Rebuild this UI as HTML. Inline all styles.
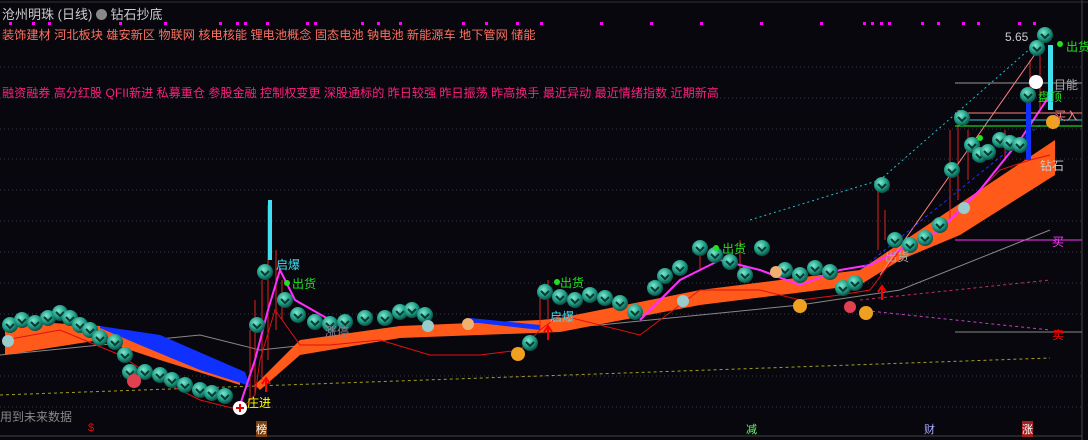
<!DOCTYPE html>
<html><head><meta charset="utf-8"><style>
html,body{margin:0;padding:0;background:#07070d;width:1088px;height:440px;overflow:hidden;font-family:"Liberation Sans","Noto Sans CJK SC",sans-serif}
.t{position:absolute;white-space:nowrap;font-size:12px}
</style></head><body>
<svg width="1088" height="440" style="position:absolute;left:0;top:0">
<defs>
<radialGradient id="g" cx="40%" cy="35%" r="65%"><stop offset="0" stop-color="#7fe8cf"/><stop offset="0.6" stop-color="#1f9e88"/><stop offset="1" stop-color="#0b5044"/></radialGradient>
<g id="c"><circle r="8" fill="url(#g)"/><path d="M-4,-1 L0,3 L4,-1" stroke="#0a3a30" stroke-width="2" fill="none"/></g>
</defs>
<g stroke="#3a3a44" stroke-dasharray="1,3" stroke-width="1">
<line x1="0" y1="67" x2="1082" y2="67"/><line x1="0" y1="98" x2="1082" y2="98"/><line x1="0" y1="129" x2="1082" y2="129"/><line x1="0" y1="159" x2="1082" y2="159"/><line x1="0" y1="190" x2="1082" y2="190"/><line x1="0" y1="221" x2="1082" y2="221"/><line x1="0" y1="252" x2="1082" y2="252"/><line x1="0" y1="283" x2="1082" y2="283"/><line x1="0" y1="314" x2="1082" y2="314"/><line x1="0" y1="376" x2="1082" y2="376"/><line x1="0" y1="407" x2="1082" y2="407"/>
</g>
<line x1="1082" y1="0" x2="1082" y2="440" stroke="#444"/>
<line x1="0" y1="436" x2="1082" y2="436" stroke="#444"/>
<line x1="0" y1="395" x2="1050" y2="358" stroke="#a0a020" stroke-dasharray="3,3"/>
<polyline points="0,355 100,345 200,335 260,350 400,335 600,325 800,305 900,290 1000,250 1050,230" stroke="#888" fill="none"/>
<polyline points="860,300 1050,280" stroke="#c03060" stroke-dasharray="3,3" fill="none"/>
<polyline points="860,310 1050,330" stroke="#c040c0" stroke-dasharray="3,3" fill="none"/>
<polygon points="5,320 100,326 160,345 240,370 240,385 160,360 100,340 5,355" fill="#ff5a1a"/>
<polygon points="100,326 160,335 245,372 250,386 200,370 140,345 100,328" fill="#1030ff"/>
<polygon points="255,385 300,340 400,326 540,320 560,318 700,290 860,270 860,285 700,305 560,332 400,338 300,355 260,390" fill="#ff5a1a"/>
<polygon points="470,322 540,330 540,325 470,318" fill="#1030ff"/>
<polygon points="860,270 1055,140 1055,175 960,235 900,260 860,285" fill="#ff5a1a"/>
<g stroke="#e02020" fill="none">
<path d="M250,400V330M255,395V300M262,380V280M268,360V205M276,330V250M282,320V280"/>
<path d="M540,330V285M548,320V280M700,270V240M740,280V240M878,250V185M885,240V210"/>
<path d="M950,220V130M958,200V110M968,180V130M1005,160V130M1030,150V60M1040,110V40"/>
</g>
<polyline points="5,340 60,330 120,355 150,375 200,400 240,410 255,395 260,360 275,310 300,345 330,345 380,340 430,355 480,355 520,350 540,330 560,315 640,335 700,290 760,290 800,300 840,295 870,290 900,250 940,230 970,200 1000,170 1030,160 1050,155" stroke="#e01010" fill="none"/>
<polyline points="240,405 255,360 268,310 280,270 295,300 330,320" stroke="#ff30ff" stroke-width="2" fill="none"/>
<polyline points="640,320 680,280 720,260 760,270 800,285 840,270 870,265 900,250 940,230 980,190 1020,140 1050,95" stroke="#ff30ff" stroke-width="2" fill="none"/>
<polyline points="880,275 1045,40" stroke="#ff8080" fill="none"/>
<polyline points="750,220 880,180 1040,40" stroke="#20c0d0" stroke-dasharray="2,3" fill="none"/>
<polyline points="860,270 1040,125" stroke="#2030ff" stroke-dasharray="3,3" fill="none"/>
<line x1="955" y1="83" x2="1082" y2="83" stroke="#999"/>
<line x1="955" y1="113" x2="1082" y2="113" stroke="#ff8080"/>
<line x1="955" y1="120" x2="1082" y2="120" stroke="#20d0d0"/>
<line x1="955" y1="126" x2="1082" y2="126" stroke="#20ff20"/>
<line x1="955" y1="240" x2="1082" y2="240" stroke="#ff30ff"/>
<line x1="955" y1="332" x2="1082" y2="332" stroke="#888"/>
<rect x="268" y="200" width="4" height="60" fill="#40e0f0"/>
<rect x="1048" y="45" width="5" height="65" fill="#40e0f0"/>
<rect x="1026" y="90" width="5" height="70" fill="#1030ff"/>
<g>
<use href="#c" x="10" y="325"/><use href="#c" x="22" y="320"/><use href="#c" x="35" y="323"/><use href="#c" x="48" y="318"/><use href="#c" x="60" y="313"/><use href="#c" x="70" y="318"/><use href="#c" x="80" y="325"/><use href="#c" x="90" y="330"/><use href="#c" x="100" y="338"/><use href="#c" x="115" y="342"/><use href="#c" x="125" y="355"/><use href="#c" x="130" y="372"/><use href="#c" x="145" y="372"/><use href="#c" x="160" y="375"/><use href="#c" x="172" y="380"/><use href="#c" x="185" y="385"/><use href="#c" x="200" y="390"/><use href="#c" x="212" y="393"/><use href="#c" x="225" y="396"/><use href="#c" x="257" y="325"/><use href="#c" x="265" y="272"/><use href="#c" x="285" y="300"/><use href="#c" x="298" y="315"/><use href="#c" x="315" y="322"/><use href="#c" x="330" y="324"/><use href="#c" x="345" y="322"/><use href="#c" x="365" y="318"/><use href="#c" x="385" y="318"/><use href="#c" x="400" y="312"/><use href="#c" x="412" y="310"/><use href="#c" x="425" y="315"/><use href="#c" x="530" y="343"/><use href="#c" x="545" y="292"/><use href="#c" x="560" y="297"/><use href="#c" x="575" y="300"/><use href="#c" x="590" y="295"/><use href="#c" x="605" y="298"/><use href="#c" x="620" y="303"/><use href="#c" x="635" y="312"/><use href="#c" x="655" y="288"/><use href="#c" x="665" y="276"/><use href="#c" x="680" y="268"/><use href="#c" x="700" y="248"/><use href="#c" x="715" y="255"/><use href="#c" x="730" y="262"/><use href="#c" x="745" y="275"/><use href="#c" x="762" y="248"/><use href="#c" x="785" y="270"/><use href="#c" x="800" y="275"/><use href="#c" x="815" y="268"/><use href="#c" x="830" y="272"/><use href="#c" x="843" y="288"/><use href="#c" x="855" y="283"/><use href="#c" x="882" y="185"/><use href="#c" x="895" y="240"/><use href="#c" x="910" y="245"/><use href="#c" x="925" y="238"/><use href="#c" x="940" y="225"/><use href="#c" x="952" y="170"/><use href="#c" x="962" y="118"/><use href="#c" x="972" y="145"/><use href="#c" x="980" y="155"/><use href="#c" x="988" y="152"/><use href="#c" x="1000" y="140"/><use href="#c" x="1010" y="143"/><use href="#c" x="1020" y="145"/><use href="#c" x="1028" y="95"/><use href="#c" x="1037" y="48"/><use href="#c" x="1045" y="35"/>
</g>
<circle cx="134" cy="381" r="7" fill="#e04050"/>
<circle cx="850" cy="307" r="6" fill="#e04050"/>
<circle cx="240" cy="408" r="7" fill="#fff"/><path d="M236,408h8M240,404v8" stroke="#e00" stroke-width="2"/>
<circle cx="518" cy="354" r="7" fill="#f0a020"/><circle cx="800" cy="306" r="7" fill="#f0a020"/><circle cx="866" cy="313" r="7" fill="#f0a020"/><circle cx="1053" cy="122" r="7" fill="#f0a020"/>
<circle cx="1036" cy="82" r="7" fill="#fff"/>
<circle cx="8" cy="341" r="6" fill="#9cc"/><circle cx="428" cy="326" r="6" fill="#9cc"/><circle cx="683" cy="301" r="6" fill="#9cc"/><circle cx="964" cy="208" r="6" fill="#9cc"/>
<circle cx="468" cy="324" r="6" fill="#f0b070"/><circle cx="776" cy="272" r="6" fill="#f0b070"/>
<circle cx="287" cy="283" r="3" fill="#20e020"/><circle cx="557" cy="282" r="3" fill="#20e020"/><circle cx="716" cy="248" r="3" fill="#20e020"/><circle cx="980" cy="138" r="3" fill="#20e020"/><circle cx="1060" cy="44" r="3" fill="#20e020"/>
<path d="M266,392V380M262,384L266,378L270,384" stroke="#f00" stroke-width="2" fill="none"/>
<path d="M548,340V328M544,332L548,326L552,332" stroke="#f00" stroke-width="2" fill="none"/>
<path d="M882,300V288M878,292L882,286L886,292" stroke="#f00" stroke-width="2" fill="none"/>
<g fill="#ff00ff"><rect x="9" y="22" width="3" height="3"/><rect x="32" y="22" width="3" height="3"/><rect x="48" y="22" width="3" height="3"/><rect x="119" y="22" width="3" height="3"/><rect x="164" y="22" width="3" height="3"/><rect x="219" y="22" width="3" height="3"/><rect x="236" y="22" width="3" height="3"/><rect x="244" y="22" width="3" height="3"/><rect x="266" y="22" width="3" height="3"/><rect x="306" y="22" width="3" height="3"/><rect x="314" y="22" width="3" height="3"/><rect x="361" y="22" width="3" height="3"/><rect x="377" y="22" width="3" height="3"/><rect x="399" y="22" width="3" height="3"/><rect x="462" y="22" width="3" height="3"/><rect x="485" y="22" width="3" height="3"/><rect x="516" y="22" width="3" height="3"/><rect x="540" y="22" width="3" height="3"/><rect x="600" y="22" width="3" height="3"/><rect x="650" y="22" width="3" height="3"/><rect x="700" y="22" width="3" height="3"/><rect x="760" y="22" width="3" height="3"/><rect x="820" y="22" width="3" height="3"/><rect x="863" y="22" width="3" height="3"/><rect x="871" y="22" width="3" height="3"/><rect x="880" y="22" width="3" height="3"/><rect x="888" y="22" width="3" height="3"/><rect x="921" y="22" width="3" height="3"/><rect x="937" y="22" width="3" height="3"/><rect x="962" y="22" width="3" height="3"/><rect x="977" y="22" width="3" height="3"/><rect x="1018" y="22" width="3" height="3"/><rect x="1033" y="22" width="3" height="3"/></g>
<line x1="0" y1="2" x2="1088" y2="2" stroke="#333"/>
</svg>
<div class="t" style="left:2px;top:4px;color:#ccc;font-size:13px">沧州明珠 (日线) <span style="display:inline-block;width:11px;height:11px;border-radius:50%;background:#888;vertical-align:-1px"></span> 钻石抄底</div>
<div class="t" style="left:2px;top:25px;color:#ff7060;font-size:12.2px">装饰建材 河北板块 雄安新区 物联网 核电核能 锂电池概念 固态电池 钠电池 新能源车 地下管网 储能</div>
<div class="t" style="left:2px;top:84px;color:#ff2080;font-size:12.1px">融资融券 高分红股 QFII新进 私募重仓 参股金融 控制权变更 深股通标的 昨日较强 昨日振荡 昨高换手 最近异动 最近情绪指数 近期新高</div>
<div class="t" style="left:0;top:408px;color:#888">用到未来数据</div>
<div class="t" style="left:88px;top:422px;color:#f00;font-size:11px">$</div>
<div class="t" style="left:256px;top:421px;color:#fff;background:#7a4010;font-size:11px">榜</div>
<div class="t" style="left:746px;top:421px;color:#6f6;font-size:11px">减</div>
<div class="t" style="left:924px;top:421px;color:#aaf;font-size:11px">财</div>
<div class="t" style="left:1022px;top:421px;color:#fff;background:#a02020;font-size:11px">涨</div>
<div class="t" style="left:276px;top:256px;color:#40e0f0">启爆</div>
<div class="t" style="left:292px;top:275px;color:#20e020">出货</div>
<div class="t" style="left:247px;top:394px;color:#ff0">庄进</div>
<div class="t" style="left:325px;top:323px;color:#889">涨停</div>
<div class="t" style="left:560px;top:274px;color:#20e020">出货</div>
<div class="t" style="left:550px;top:308px;color:#40e0f0">启爆</div>
<div class="t" style="left:722px;top:240px;color:#20e020">出货</div>
<div class="t" style="left:885px;top:248px;color:#aaa">出货</div>
<div class="t" style="left:1005px;top:30px;color:#ccc">5.65</div>
<div class="t" style="left:1066px;top:38px;color:#20e020">出货</div>
<div class="t" style="left:1038px;top:88px;color:#20e020">盘顶</div>
<div class="t" style="left:1054px;top:76px;color:#aaa">目能</div>
<div class="t" style="left:1054px;top:107px;color:#ff8080">买入</div>
<div class="t" style="left:1040px;top:157px;color:#ccc">钻石</div>
<div class="t" style="left:1052px;top:233px;color:#ff30ff">买</div>
<div class="t" style="left:1052px;top:326px;color:#f00">卖</div>
</body></html>
